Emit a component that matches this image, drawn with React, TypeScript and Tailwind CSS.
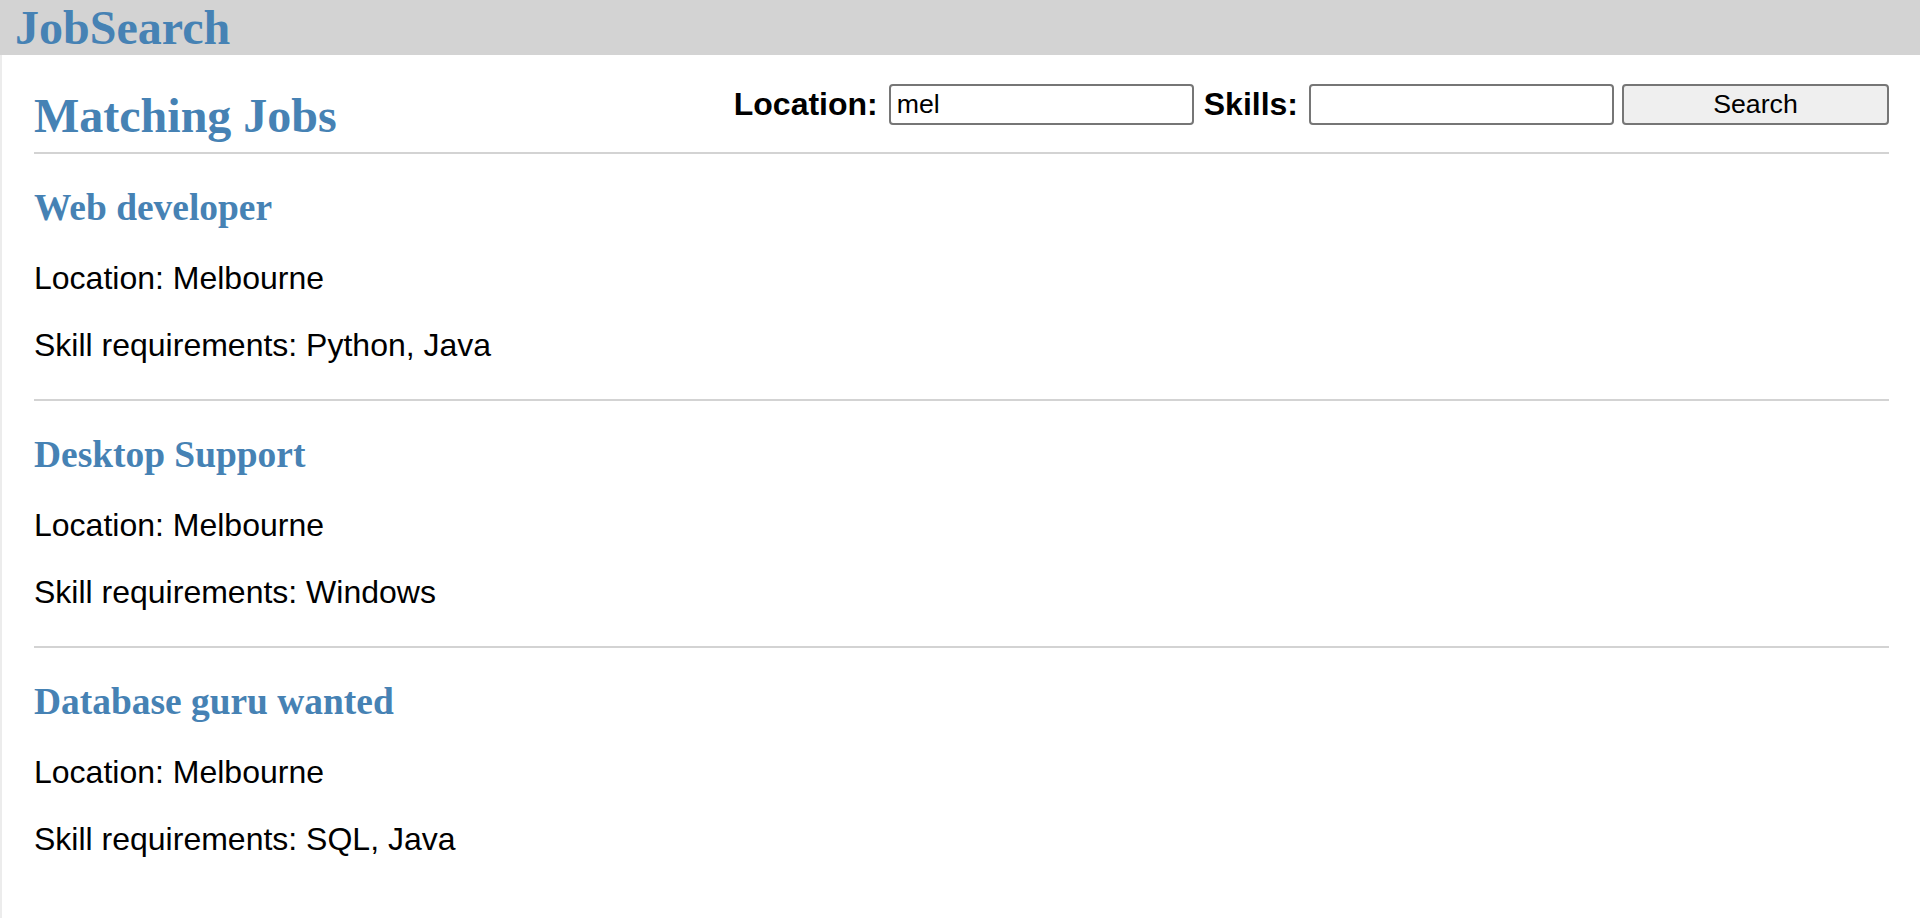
import React from 'react';

const jobs = [
  { title: 'Web developer', location: 'Melbourne', skills: 'Python, Java' },
  { title: 'Desktop Support', location: 'Melbourne', skills: 'Windows' },
  { title: 'Database guru wanted', location: 'Melbourne', skills: 'SQL, Java' },
];

export default function App() {
  return (
    <div className="flex min-h-screen flex-col bg-white font-['Liberation_Sans',Arial,sans-serif] text-black">
      {/* Top bar */}
      <header className="h-[55px] bg-[#d3d3d3] pl-[15px]">
        <h1 className="font-['Liberation_Serif','Times_New_Roman',serif] text-[48px] font-bold leading-[55px] text-[#4682b4]">
          JobSearch
        </h1>
      </header>

      <main className="flex-1 border-l-2 border-[#ececec] pl-[32px] pr-[31px]">
        {/* Heading + search form */}
        <div className="flex items-start justify-between pt-[29px]">
          <h2 className="mt-[4px] font-['Liberation_Serif','Times_New_Roman',serif] text-[48px] font-bold leading-[55px] text-[#4682b4]">
            Matching Jobs
          </h2>
          <form className="flex h-[41px] items-center" onSubmit={(e) => e.preventDefault()}>
            <label className="text-[32px] font-bold leading-[37px]">Location:</label>
            <input
              type="text"
              defaultValue="mel"
              className="ml-[11px] h-[41px] w-[305px] rounded-[4px] border-2 border-[#767676] bg-white px-[6px] text-[26.7px] leading-none outline-none"
            />
            <label className="ml-[10px] text-[32px] font-bold leading-[37px]">Skills:</label>
            <input
              type="text"
              className="ml-[11px] h-[41px] w-[305px] rounded-[4px] border-2 border-[#767676] bg-white px-[6px] text-[26.7px] leading-none outline-none"
            />
            <button
              type="submit"
              className="ml-[8px] h-[41px] w-[267px] rounded-[4px] border-2 border-[#767676] bg-[#efefef] text-[26.7px] leading-none"
            >
              Search
            </button>
          </form>
        </div>

        <hr className="mt-[9px] h-[2px] border-0 bg-[#d3d3d3]" />

        {/* Job list */}
        {jobs.map((job, idx) => (
          <div key={idx}>
            <h3 className="mt-[32px] font-['Liberation_Serif','Times_New_Roman',serif] text-[37.44px] font-bold leading-[43px] text-[#4682b4]">
              {job.title}
            </h3>
            <p className="mt-[31px] text-[32px] leading-[37px]">Location: {job.location}</p>
            <p className="mt-[30px] text-[32px] leading-[37px]">Skill requirements: {job.skills}</p>
            {idx < jobs.length - 1 && <hr className="mt-[35px] h-[2px] border-0 bg-[#d3d3d3]" />}
          </div>
        ))}
      </main>
    </div>
  );
}
